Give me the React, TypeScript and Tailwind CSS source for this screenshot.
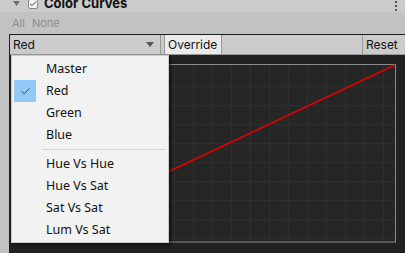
import { Check } from "lucide-react";

const channels = ["Master", "Red", "Green", "Blue"];
const modes = ["Hue Vs Hue", "Hue Vs Sat", "Sat Vs Sat", "Lum Vs Sat"];

function CurveGrid() {
  const xs = Array.from({ length: 20 }, (_, i) => 18 + 3.3 + i * 19);
  const ys = Array.from({ length: 9 }, (_, i) => 86.7 + i * 19);
  return (
    <svg width="396" height="199" viewBox="9 55 396 199" className="block">
      <rect x="18.5" y="64.5" width="376" height="177.5" fill="#262626" stroke="#8c8c8c" />
      {xs
        .filter((x) => x < 394)
        .map((x) => (
          <line key={x} x1={x} x2={x} y1="65" y2="241.5" stroke="#313131" />
        ))}
      {ys
        .filter((y) => y < 241)
        .map((y) => (
          <line key={y} x1="19" x2="394" y1={y} y2={y} stroke="#313131" />
        ))}
      <line x1="19" y1="241.5" x2="394" y2="65" stroke="#e00000" strokeWidth="1.6" />
    </svg>
  );
}

export default function App() {
  return (
    <div className="relative w-[405px] h-[253px] overflow-hidden bg-[#c2c2c2] font-['Inter','Liberation_Sans',sans-serif]">
      <div className="h-[12px] bg-[#cbcbcb] flex items-start overflow-hidden">
        <svg width="7" height="6" viewBox="0 0 7 6" className="ml-[13px] mt-[1px]">
          <path d="M0 0 H7 L3.5 5 Z" fill="#6e6e6e" />
        </svg>
        <div className="ml-[8px] -mt-[1px] w-[10px] h-[10px] rounded-[2px] bg-[#f3f3f3] border border-[#8a8a8a] flex items-center justify-center">
          <Check size={8} strokeWidth={2.5} color="#222" />
        </div>
        <span className="ml-[6px] -mt-[5px] text-[13px] font-bold leading-[16px] text-[#111]">
          Color Curves
        </span>
        <div className="ml-auto mr-[8px] mt-[1px] flex flex-col gap-[2px]">
          <div className="w-[2px] h-[2px] bg-[#555]" />
          <div className="w-[2px] h-[2px] bg-[#555]" />
          <div className="w-[2px] h-[2px] bg-[#555]" />
        </div>
      </div>

      <div className="h-[22px] flex items-center gap-[7px] pl-[12px] text-[11px] text-[#8d8d8d]">
        <span>All</span>
        <span>None</span>
      </div>

      <div className="ml-[9px] border-l border-t border-[#1e1e1e]">
        <div className="h-[20px] flex bg-[#cbcbcb] border-b border-[#999] text-[12px] text-[#111]">
          <div className="w-[151px] flex items-center justify-between pl-[3px] pr-[6px] border-r border-[#999]">
            <span>Red</span>
            <svg width="8" height="5" viewBox="0 0 8 5">
              <path d="M0 0 H8 L4 5 Z" fill="#555" />
            </svg>
          </div>
          <div className="w-[4px] border-r border-[#999]" />
          <div className="w-[57px] bg-[#ebebeb] border-r border-[#999] flex items-center pl-[3px]">
            Override
          </div>
          <div className="flex-1 border-r border-[#999]" />
          <div className="w-[42px] flex items-center pl-[3px]">Reset</div>
        </div>
        <div className="bg-[#222222]">
          <CurveGrid />
        </div>
      </div>

      <div className="absolute left-[11px] top-[55px] w-[158px] h-[188px] bg-[#f2f2f2] border border-[#cccccc] shadow-[2px_2px_3px_rgba(0,0,0,0.55)] pt-[2px] font-['Noto_Sans','Open_Sans',sans-serif] text-[12.5px] text-[#111]">
        {channels.map((c) => (
          <div key={c} className="h-[22px] flex items-center">
            <div
              className={
                c === "Red"
                  ? "ml-[2px] w-[22px] h-[22px] bg-[#91c9f7] flex items-center justify-center"
                  : "ml-[2px] w-[22px] h-[22px]"
              }
            >
              {c === "Red" && <Check size={11} strokeWidth={2} color="#333" />}
            </div>
            <span className="ml-[10px]">{c}</span>
          </div>
        ))}
        <div className="h-[7px] flex items-center pl-[30px] pr-[2px]">
          <div className="h-px w-full bg-[#d4d4d4]" />
        </div>
        {modes.map((m) => (
          <div key={m} className="h-[22px] flex items-center pl-[34px]">
            {m}
          </div>
        ))}
      </div>
    </div>
  );
}
